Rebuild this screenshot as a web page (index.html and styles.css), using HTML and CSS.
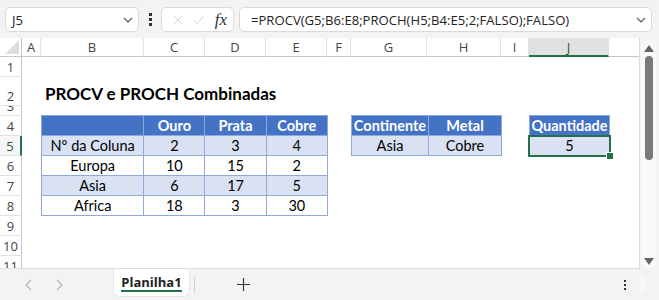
FILE: index.html
```html
<!DOCTYPE html>
<html lang="pt">
<head>
    <meta charset="UTF-8">
    <title>PROCV e PROCH Combinadas</title>
    <link rel="stylesheet" href="styles.css">
</head>
<body>
    <div class="toolbar">
        <div class="name-box">
            <span>J5</span>
            <svg class="chev" width="10" height="6" viewBox="0 0 10 6"><path d="M1 1l4 4 4-4" fill="none" stroke="#555" stroke-width="1.1"/></svg>
        </div>
        <div class="vdots"><i></i><i></i><i></i></div>
        <div class="fx-box">
            <svg width="14" height="14" viewBox="0 0 14 14"><path d="M1 1l12 12M13 1L1 13" stroke="#c4c4c4" stroke-width="1.1"/></svg>
            <svg width="16" height="12" viewBox="0 0 16 12"><path d="M1 6l5 5L15 1" fill="none" stroke="#c4c4c4" stroke-width="1.1"/></svg>
            <span class="fx">fx</span>
        </div>
        <div class="formula">
            <span>=PROCV(G5;B6:E8;PROCH(H5;B4:E5;2;FALSO);FALSO)</span>
            <svg class="chev" width="10" height="6" viewBox="0 0 10 6"><path d="M1 1l4 4 4-4" fill="none" stroke="#555" stroke-width="1.1"/></svg>
        </div>
    </div>

    <div class="workspace">
        <div class="sheet">
            <div class="corner"><svg width="14" height="14" viewBox="0 0 14 14"><path d="M14 0v14H0z" fill="#dcdcdc"/></svg></div>
            <div class="ch">A</div>
            <div class="ch">B</div>
            <div class="ch">C</div>
            <div class="ch">D</div>
            <div class="ch">E</div>
            <div class="ch">F</div>
            <div class="ch">G</div>
            <div class="ch">H</div>
            <div class="ch">I</div>
            <div class="ch active">J</div>
            <div class="ch"></div>

            <div class="rh">1</div>
            <div class="rh">2</div>
            <div class="rh short">3</div>
            <div class="rh">4</div>
            <div class="rh active">5</div>
            <div class="rh">6</div>
            <div class="rh">7</div>
            <div class="rh">8</div>
            <div class="rh">9</div>
            <div class="rh">10</div>
            <div class="rh">11</div>

            <div class="title">PROCV e PROCH Combinadas</div>

            <table class="xl t-main">
                <tr class="head"><td></td><td>Ouro</td><td>Prata</td><td>Cobre</td></tr>
                <tr class="band"><td>Nº da Coluna</td><td>2</td><td>3</td><td>4</td></tr>
                <tr><td>Europa</td><td>10</td><td>15</td><td>2</td></tr>
                <tr class="band"><td>Asia</td><td>6</td><td>17</td><td>5</td></tr>
                <tr><td>Africa</td><td>18</td><td>3</td><td>30</td></tr>
            </table>

            <table class="xl t-look">
                <tr class="head"><td>Continente</td><td>Metal</td></tr>
                <tr class="band"><td>Asia</td><td>Cobre</td></tr>
            </table>

            <table class="xl t-result">
                <tr class="head"><td>Quantidade</td></tr>
                <tr class="band"><td class="selected">5<div class="sel-box"><span class="handle"></span></div></td></tr>
            </table>
        </div>

        <div class="vscroll">
            <div class="track">
                <svg class="arrow" width="10" height="7" viewBox="0 0 10 7"><path d="M5 0l5 7H0z" fill="#666"/></svg>
                <div class="thumb"></div>
                <div class="spacer"></div>
                <svg class="arrow" width="10" height="7" viewBox="0 0 10 7"><path d="M0 0h10L5 7z" fill="#666"/></svg>
            </div>
        </div>
    </div>

    <div class="tabs">
        <div class="nav">
            <svg width="8" height="12" viewBox="0 0 8 12"><path d="M7 1L2 6l5 5" fill="none" stroke="#b4b4b4" stroke-width="1.2"/></svg>
            <svg width="8" height="12" viewBox="0 0 8 12"><path d="M1 1l5 5-5 5" fill="none" stroke="#b4b4b4" stroke-width="1.2"/></svg>
        </div>
        <div class="tab">Planilha1</div>
        <div class="tab-sep"></div>
        <div class="add">
            <svg width="13" height="13" viewBox="0 0 13 13"><path d="M6.5 0v13M0 6.5h13" stroke="#333" stroke-width="1.2"/></svg>
        </div>
        <div class="tabs-fill"></div>
        <div class="vdots small"><i></i><i></i><i></i></div>
        <div class="hscroll-stub"></div>
    </div>
</body>
</html>
```

FILE: styles.css
```css
body {
    margin: 0;
    width: 659px;
    height: 300px;
    overflow: hidden;
    background: #f3f3f3;
    font-family: "Open Sans", "Noto Sans", sans-serif;
    color: #333;
}

/* formula bar */
.toolbar {
    display: flex;
    align-items: center;
    height: 38px;
    padding: 0 7px 0 5px;
    box-sizing: border-box;
}
.name-box, .fx-box, .formula {
    height: 25px;
    box-sizing: border-box;
    background: #fff;
    border: 1px solid #dadada;
    border-radius: 5px;
    display: flex;
    align-items: center;
    margin-top: 1px;
}
.name-box {
    width: 134px;
    padding: 0 5px 0 6px;
    font-size: 13px;
    color: #222;
}
.name-box span, .formula span {
    flex: 1;
}
.vdots {
    width: 22px;
    display: flex;
    flex-direction: column;
    align-items: center;
    gap: 2px;
}
.vdots i {
    width: 3px;
    height: 3px;
    background: #333;
}
.fx-box {
    width: 73px;
    padding: 0 6px 0 11px;
    gap: 10px;
}
.fx {
    font-family: "Liberation Serif", serif;
    font-style: italic;
    font-size: 17px;
    color: #333;
    margin-left: 1px;
}
.formula {
    flex: 1;
    margin-left: 5px;
    padding: 0 5px 0 11px;
    font-size: 13.1px;
    color: #222;
}

/* grid */
.workspace {
    display: flex;
    height: 231px;
}
.sheet {
    width: 640px;
    flex: none;
    background: #fff;
    overflow: hidden;
    border-right: 1px solid #dedede;
    border-bottom: 1px solid #dedede;
    box-sizing: border-box;
    display: grid;
    grid-template-columns: 22px 19px 103px 61px 61px 61px 24px 76px 74px 28px 80px 31px;
    grid-template-rows: 19px 20px 29px 10px repeat(8, 20px);
    font-family: "Lato", sans-serif;
}
.corner, .ch {
    background: #fff;
    border-bottom: 1px solid #c6c6c6;
    border-right: 1px solid #e1e1e1;
    box-sizing: border-box;
}
.corner {
    display: flex;
    align-items: flex-end;
    justify-content: flex-end;
    padding: 0 2px 2px 0;
    border-right-color: #c6c6c6;
}
.ch {
    font-family: "Open Sans", sans-serif;
    font-size: 13px;
    color: #444;
    text-align: center;
    line-height: 18px;
}
.ch.active {
    background: #e1e1e1;
    border-bottom: 2px solid #217346;
    color: #1e5e3a;
}
.rh {
    grid-column: 1;
    font-family: "Open Sans", sans-serif;
    font-size: 13px;
    color: #444;
    text-align: center;
    border-right: 1px solid #c6c6c6;
    border-bottom: 1px solid #e1e1e1;
    box-sizing: border-box;
    display: flex;
    align-items: flex-end;
    justify-content: center;
    line-height: 18px;
    overflow: hidden;
}
.rh.short {
    align-items: flex-start;
    line-height: 0;
}
.rh.active {
    border-right: 2px solid #217346;
    color: #1e5e3a;
    background: #f6f6f6;
}

.title {
    grid-column: 3 / 9;
    grid-row: 3;
    align-self: end;
    padding: 0 0 2px 4px;
    font-weight: bold;
    font-size: 17px;
    color: #000;
    white-space: nowrap;
}

/* excel tables */
.xl {
    border-collapse: collapse;
    font-size: 14.5px;
    color: #000;
    align-self: start;
    margin-top: -1px;
}
.xl td {
    border: 1px solid #8ea9db;
    height: 19px;
    padding: 0;
    text-align: center;
    line-height: 18px;
}
.xl .head td {
    background: #4472c4;
    color: #fff;
    font-weight: bold;
}
.xl .band td {
    background: #d9e1f2;
}
.t-main {
    grid-column: 3 / 7;
    grid-row: 5 / 10;
    width: 287px;
}
.t-main td:first-child { width: 103px; }
.t-main td { width: 61px; }
.t-look {
    grid-column: 8 / 10;
    grid-row: 5 / 7;
    width: 151px;
}
.t-look td:first-child { width: 76px; }
.t-result {
    grid-column: 11;
    grid-row: 5 / 7;
    width: 81px;
}
.selected {
    position: relative;
}
.sel-box {
    position: absolute;
    left: -2px;
    top: -1px;
    right: -2px;
    bottom: -2px;
    border: 2px solid #217346;
}
.handle {
    position: absolute;
    right: -5px;
    bottom: -5px;
    width: 6px;
    height: 6px;
    background: #217346;
    border: 1px solid #fff;
}

/* scrollbar */
.vscroll {
    flex: 1;
    padding: 2px 3px 0 1px;
}
.track {
    height: 229px;
    background: #f9f9f9;
    border-radius: 8px;
    display: flex;
    flex-direction: column;
    align-items: center;
    padding: 5px 0 4px;
    box-sizing: border-box;
}
.thumb {
    width: 8px;
    height: 104px;
    margin-top: 4px;
    background: #7a7a7a;
    border-radius: 4px;
}
.spacer { flex: 1; }

/* sheet tabs */
.tabs {
    height: 31px;
    display: flex;
    align-items: stretch;
    padding-right: 14px;
}
.nav {
    width: 113px;
    display: flex;
    align-items: center;
    gap: 24px;
    padding-left: 24px;
    box-sizing: border-box;
}
.tab {
    width: 77px;
    height: 28px;
    background: #fff;
    border: 1px solid #e6e6e6;
    border-top: none;
    border-radius: 0 0 6px 6px;
    box-sizing: border-box;
    font-family: "Open Sans", sans-serif;
    font-weight: bold;
    font-size: 13px;
    color: #222;
    text-align: center;
    line-height: 26px;
    position: relative;
}
.tab::after {
    content: "";
    position: absolute;
    left: 7px;
    right: 7px;
    bottom: 4px;
    height: 2px;
    background: #217346;
}
.tab-sep {
    width: 1px;
    background: #cfcfcf;
    margin: 8px 0 7px 4px;
}
.add {
    width: 96px;
    display: flex;
    align-items: center;
    justify-content: center;
}
.tabs-fill { flex: 1; }
.vdots.small {
    width: 8px;
    justify-content: center;
}
.vdots.small i {
    width: 2px;
    height: 2px;
}
.hscroll-stub {
    width: 5px;
    height: 17px;
    margin: 7px 0 0 11px;
    background: #f8f8f8;
    border-radius: 3px;
}
```
